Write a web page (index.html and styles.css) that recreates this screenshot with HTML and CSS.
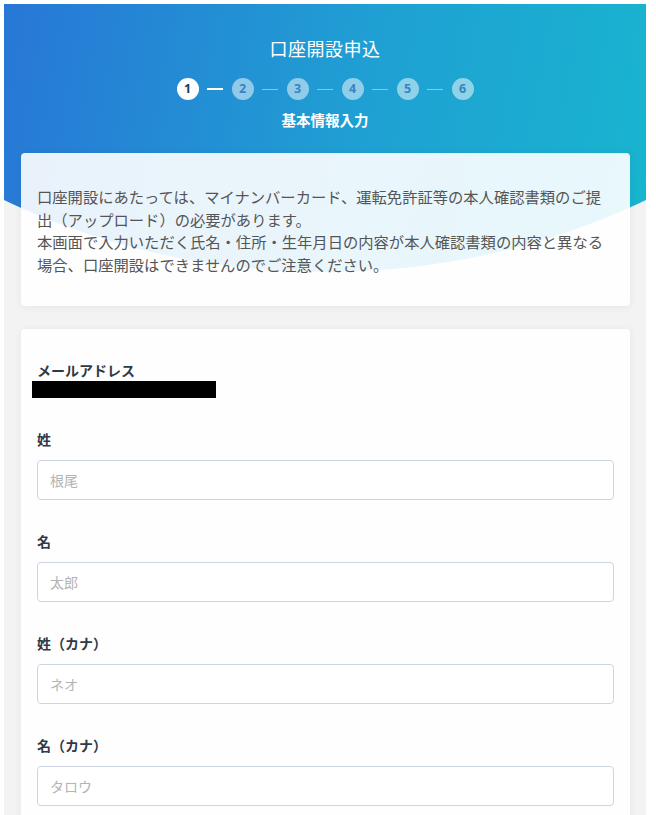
FILE: index.html
```html
<!DOCTYPE html>
<html lang="ja">
<head>
<meta charset="utf-8">
<title>口座開設申込</title>
<link rel="stylesheet" href="styles.css">
</head>
<body>
<div class="app">
  <header class="hero">
    <h1 class="hero-title">口座開設申込</h1>
    <ol class="steps">
      <li class="step step-current">1</li>
      <li class="step-line step-line-done"></li>
      <li class="step">2</li>
      <li class="step-line"></li>
      <li class="step">3</li>
      <li class="step-line"></li>
      <li class="step">4</li>
      <li class="step-line"></li>
      <li class="step">5</li>
      <li class="step-line"></li>
      <li class="step">6</li>
    </ol>
    <p class="step-name">基本情報入力</p>
  </header>
  <main class="content">
    <section class="card notice">
      <p>口座開設にあたっては、マイナンバーカード、運転免許証等の本人確認書類のご提出（アップロード）の必要があります。<br>本画面で入力いただく氏名・住所・生年月日の内容が本人確認書類の内容と異なる場合、口座開設はできませんのでご注意ください。</p>
    </section>
    <section class="card form">
      <div class="field field-static">
        <div class="label">メールアドレス</div>
        <div class="value"><span class="redacted"></span></div>
      </div>
      <div class="field">
        <label class="label" for="sei">姓</label>
        <input class="input" id="sei" type="text" placeholder="根尾">
      </div>
      <div class="field">
        <label class="label" for="mei">名</label>
        <input class="input" id="mei" type="text" placeholder="太郎">
      </div>
      <div class="field">
        <label class="label" for="seikana">姓（カナ）</label>
        <input class="input" id="seikana" type="text" placeholder="ネオ">
      </div>
      <div class="field">
        <label class="label" for="meikana">名（カナ）</label>
        <input class="input" id="meikana" type="text" placeholder="タロウ">
      </div>
    </section>
  </main>
</div>
</body>
</html>
```

FILE: styles.css
```css
* { box-sizing: border-box; }

html, body {
  background: #ffffff;
}

body {
  margin: 4px 10px 0 4px;
  font-family: "Noto Sans CJK JP", "Noto Sans", sans-serif;
  color: #333;
}

.app {
  background: #f3f3f3;
  min-height: 900px;
}

.hero {
  height: 268px;
  padding-top: 32px;
  background: linear-gradient(100deg, #2877d6 0%, #1fa0d3 55%, #18b5cf 100%);
  clip-path: ellipse(100% 537px at 50% -269px);
  color: #fff;
  text-align: center;
}

.hero-title {
  margin: 0;
  font-size: 18px;
  line-height: 24px;
  font-weight: 400;
  letter-spacing: 0.5px;
}

.steps {
  list-style: none;
  margin: 18px 0 0;
  padding: 0;
  display: flex;
  justify-content: center;
  align-items: center;
}

.step {
  width: 22px;
  height: 22px;
  border-radius: 50%;
  background: rgba(255, 255, 255, 0.5);
  color: #3a82c2;
  font-family: "Noto Sans", "Open Sans", sans-serif;
  font-weight: 700;
  font-size: 12.5px;
  line-height: 22px;
  text-align: center;
}

.step-current {
  background: #ffffff;
  color: #1d3b5e;
}

.step-line {
  width: 16px;
  height: 1px;
  margin: 0 8.5px;
  background: rgba(255, 255, 255, 0.45);
}

.step-line-done {
  height: 2px;
  background: #ffffff;
}

.step-name {
  margin: 10px 0 0;
  font-size: 14.5px;
  line-height: 20px;
  font-weight: 700;
}

.content {
  position: relative;
  z-index: 1;
  margin-top: -119px;
  padding: 0 16px 0 17px;
  display: flex;
  flex-direction: column;
  gap: 23px;
}

.card {
  background: rgba(255, 255, 255, 0.9);
  border-radius: 4px;
  box-shadow: 0 1px 8px rgba(0, 0, 0, 0.06);
  padding: 32px 16px;
}

.notice p {
  margin: 0;
  font-size: 15.3px;
  line-height: 22.5px;
  color: #555;
}

.notice {
  padding-top: 32px;
  padding-bottom: 31px;
}

.form {
  padding-top: 31px;
  padding-bottom: 40px;
  display: flex;
  flex-direction: column;
  gap: 30px;
}

.field {
  display: flex;
  flex-direction: column;
}

.label {
  font-size: 14px;
  line-height: 20px;
  font-weight: 700;
  color: #2f3a46;
  margin-bottom: 11px;
}

.field-static .label {
  margin-bottom: 1px;
}

.value {
  height: 17px;
  margin-left: -5px;
}

.redacted {
  display: block;
  width: 184px;
  height: 17px;
  background: #000;
}

.field + .field:not(.field-static) {
  margin-top: 1px;
}

.field-static + .field {
  margin-top: 0;
}

.input {
  height: 40px;
  width: 100%;
  border: 1px solid #cbd6e2;
  border-radius: 4px;
  padding: 0 12px;
  font-family: "Noto Sans CJK JP", "Noto Sans", sans-serif;
  font-size: 14px;
  color: #333;
  background: #fff;
}

.input::placeholder {
  color: #b4b4b4;
}
```
